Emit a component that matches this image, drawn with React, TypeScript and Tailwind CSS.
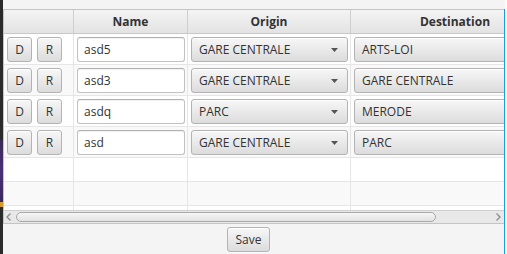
import React from "react";

const rows = [
  { name: "asd5", origin: "GARE CENTRALE", dest: "ARTS-LOI" },
  { name: "asd3", origin: "GARE CENTRALE", dest: "GARE CENTRALE" },
  { name: "asdq", origin: "PARC", dest: "MERODE" },
  { name: "asd", origin: "GARE CENTRALE", dest: "PARC" },
];

const btn =
  "h-[25px] rounded-[3px] border border-[#b3b3b3] bg-gradient-to-b from-[#f7f7f7] to-[#dcdcdc] shadow-[0_1px_0_rgba(255,255,255,0.6),inset_0_1px_0_#ffffff] text-[#333] text-[12px] leading-none flex items-center";

function Arrow() {
  return (
    <svg width="7" height="4" viewBox="0 0 7 4" className="shrink-0">
      <path d="M0 0H7L3.5 4Z" fill="#555" />
    </svg>
  );
}

function DataRow({ r, i }: { r: (typeof rows)[number]; i: number }) {
  const bg = i % 2 === 0 ? "bg-white" : "bg-[#f9f9f9]";
  return (
    <div className={`flex h-[31px] shrink-0 border-b border-[#e6e6e6] ${bg}`}>
      <div className="w-[70px] shrink-0 border-r border-[#e6e6e6] flex items-start pt-[3px] pl-[3px] gap-[5px]">
        <div className={`${btn} w-[25px] justify-center`}>D</div>
        <div className={`${btn} w-[25px] justify-center`}>R</div>
      </div>
      <div className="w-[114px] shrink-0 border-r border-[#e6e6e6] pt-[3px] pl-[3px]">
        <div className="w-[108px] h-[25px] rounded-[3px] border border-[#c2c2c2] border-t-[#b0b0b0] bg-white shadow-[inset_0_1px_1px_rgba(0,0,0,0.06)] flex items-center pl-[6px] text-[12px] text-[#333] leading-none">
          {r.name}
        </div>
      </div>
      <div className="w-[163px] shrink-0 border-r border-[#e6e6e6] pt-[3px] pl-[3px]">
        <div className={`${btn} w-[157px] justify-between pl-[7px] pr-[9px]`}>
          <span>{r.origin}</span>
          <Arrow />
        </div>
      </div>
      <div className="w-[209px] shrink-0 border-r border-[#e6e6e6] pt-[3px] pl-[3px]">
        <div className={`${btn} w-[203px] justify-between pl-[7px] pr-[9px]`}>
          <span>{r.dest}</span>
          <Arrow />
        </div>
      </div>
    </div>
  );
}

function EmptyRow({ i, h }: { i: number; h: string }) {
  const bg = i % 2 === 0 ? "bg-white" : "bg-[#f9f9f9]";
  return (
    <div className={`flex ${h} shrink-0 border-b border-[#e6e6e6] ${bg}`}>
      <div className="w-[70px] shrink-0 border-r border-[#e6e6e6]" />
      <div className="w-[114px] shrink-0 border-r border-[#e6e6e6]" />
      <div className="w-[163px] shrink-0 border-r border-[#e6e6e6]" />
      <div className="w-[209px] shrink-0 border-r border-[#e6e6e6]" />
    </div>
  );
}

export default function App() {
  return (
    <div className="w-[507px] h-[254px] flex bg-[#f4f4f4] overflow-hidden font-['Open_Sans','Noto_Sans',sans-serif]">
      {/* background window strip */}
      <div className="w-[3px] h-full flex flex-col shrink-0 bg-[#262626]">
        <div className="h-[140px] bg-[#2a2a2a]" />
        <div className="h-[62px] bg-gradient-to-b from-[#3a2a55] via-[#4b2f78] to-[#3a2660]" />
        <div className="h-[5px] bg-[#d49a2a]" />
        <div className="flex-1 bg-[#2a2a2a]" />
      </div>

      {/* main */}
      <div className="w-[501px] shrink-0 flex flex-col pt-[9px]">
        <div className="flex flex-col border-t border-l border-b border-[#c4c4c4] overflow-hidden">
          {/* header */}
          <div className="flex h-[24px] shrink-0 border-b border-[#c8c8c8] bg-gradient-to-b from-[#f4f4f4] to-[#e3e3e3] text-[12px] font-bold text-[#333]">
            <div className="w-[70px] shrink-0 border-r border-[#cfcfcf]" />
            <div className="w-[114px] shrink-0 border-r border-[#cfcfcf] flex items-center justify-center">Name</div>
            <div className="w-[163px] shrink-0 border-r border-[#cfcfcf] flex items-center justify-center">Origin</div>
            <div className="w-[209px] shrink-0 border-r border-[#cfcfcf] flex items-center justify-center">Destination</div>
          </div>
          {/* body */}
          <div className="h-[176px] flex flex-col overflow-hidden bg-white">
            {rows.map((r, i) => (
              <DataRow key={i} r={r} i={i} />
            ))}
            <EmptyRow i={4} h="h-[24px]" />
            <EmptyRow i={5} h="h-[24px]" />
            <EmptyRow i={6} h="h-[24px]" />
          </div>
          {/* horizontal scrollbar */}
          <div className="h-[13px] shrink-0 border-t border-[#cfcfcf] bg-[#e8e8e8] flex items-center pl-[2px] pr-[3px]">
            <svg width="6" height="8" viewBox="0 0 6 8" className="shrink-0">
              <path d="M4.5 0.5L1 4L4.5 7.5" stroke="#8c8c8c" strokeWidth="1.3" fill="none" />
            </svg>
            <div className="ml-[4px] w-[420px] h-[10px] rounded-full border border-[#a9a9a9] bg-gradient-to-b from-[#f6f6f6] to-[#e2e2e2]" />
            <div className="flex-1" />
            <svg width="6" height="8" viewBox="0 0 6 8" className="shrink-0">
              <path d="M1.5 0.5L5 4L1.5 7.5" stroke="#8c8c8c" strokeWidth="1.3" fill="none" />
            </svg>
          </div>
        </div>
        <div className="pt-[3px] pl-[224px]">
          <div className={`${btn} w-[43px] justify-center`}>Save</div>
        </div>
      </div>

      {/* focus / window border */}
      <div className="w-[1px] shrink-0 flex flex-col">
        <div className="h-[9px] bg-[#f4f4f4]" />
        <div className="flex-1 bg-[#1a9ee0]" />
      </div>
      <div className="flex-1 bg-[#fbfbfb]" />
    </div>
  );
}
